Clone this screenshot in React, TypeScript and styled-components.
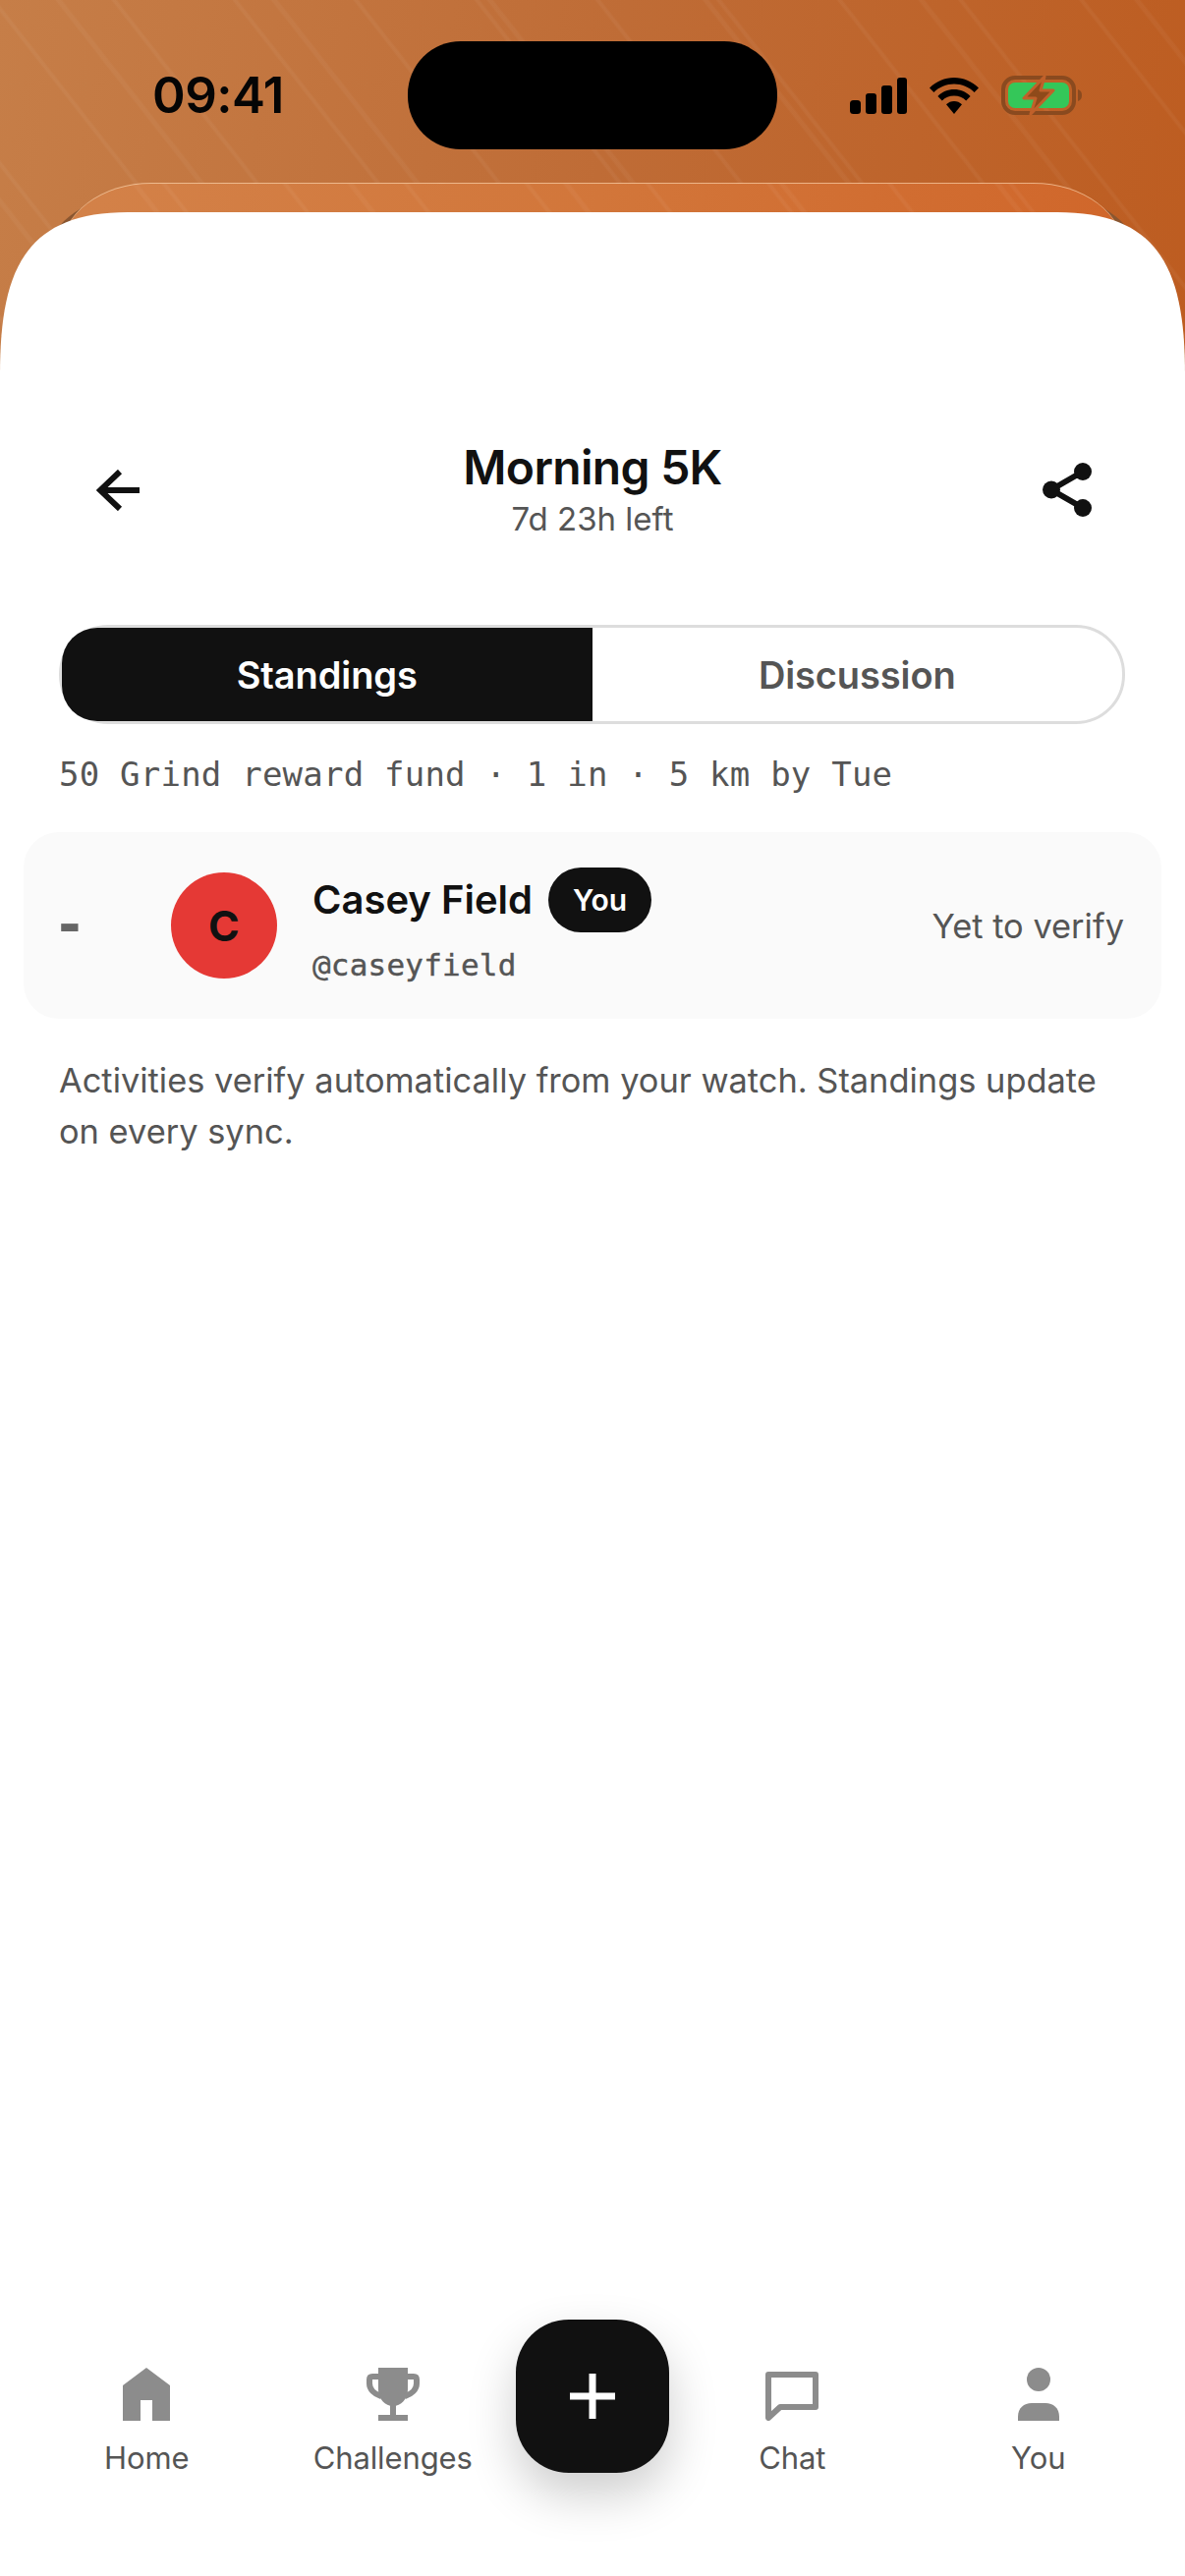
import React from "react";
import styled, { createGlobalStyle, css } from "styled-components";

const GlobalStyle = createGlobalStyle`
  html, body {
    margin: 0;
    padding: 0;
    background: #ffffff;
  }
  * {
    box-sizing: border-box;
  }
`;

const sans = `"Inter", "Liberation Sans", sans-serif`;
const mono = `"DejaVu Sans Mono", "Liberation Mono", monospace`;

const streaks = css`
  repeating-linear-gradient(
    52deg,
    rgba(255, 255, 255, 0) 0 56px,
    rgba(255, 255, 255, 0.045) 58px 60px,
    rgba(255, 255, 255, 0) 62px 97px
  ),
  repeating-linear-gradient(
    52deg,
    rgba(255, 255, 255, 0) 0 129px,
    rgba(255, 255, 255, 0.04) 131px 134px,
    rgba(255, 255, 255, 0) 136px 173px
  )
`;

const Page = styled.div`
  position: relative;
  width: 1206px;
  height: 2622px;
  overflow: hidden;
  background: #ffffff;
  font-family: ${sans};
  color: #111111;
`;

const Backdrop = styled.div`
  position: absolute;
  top: 0;
  left: 0;
  width: 100%;
  height: 420px;
  background: ${streaks},
    linear-gradient(100deg, #c67e48 0%, #bf6c36 50%, #bd5c20 100%);
`;

const ShadowCard = styled.div`
  position: absolute;
  top: 204px;
  left: 44px;
  right: 44px;
  height: 120px;
  border-radius: 72px 72px 0 0;
  background: #8a5630;
`;

const BackCard = styled.div`
  position: absolute;
  top: 186px;
  left: 62px;
  right: 62px;
  height: 120px;
  border-radius: 92px 92px 0 0 / 70px 70px 0 0;
  border-top: 1px solid rgba(255, 225, 190, 0.6);
  background: ${streaks},
    linear-gradient(100deg, #d38249 0%, #d2763a 50%, #d0662a 100%);
`;

const StatusBar = styled.div`
  position: relative;
  display: grid;
  grid-template-columns: 415px 376px 1fr;
  align-items: center;
  height: 110px;
  margin-top: 42px;
`;

const Time = styled.div`
  padding-left: 155px;
  font-size: 51px;
  font-weight: 600;
  line-height: 60px;
  color: #050505;
  letter-spacing: -0.5px;
`;

const Island = styled.div`
  height: 110px;
  border-radius: 54px;
  background: #000000;
`;

const StatusIcons = styled.div`
  display: flex;
  align-items: center;
  padding-left: 74px;
  svg {
    display: block;
    flex: none;
  }
`;

const WifiSlot = styled.div`
  margin: 0 22px 0 23px;
`;

const Sheet = styled.main`
  position: relative;
  display: flex;
  flex-direction: column;
  height: 2406px;
  margin-top: 64px;
  background: #ffffff;
  clip-path: path("M0 165C0 60 25 0 130 0H1076C1181 0 1206 60 1206 165V2406H0Z");
`;

const Header = styled.header`
  display: grid;
  grid-template-columns: 1fr auto 1fr;
  align-items: center;
  padding: 231px 95px 0;
  svg {
    display: block;
  }
`;

const BackSlot = styled.div`
  padding-left: 3px;
`;

const ShareSlot = styled.div`
  justify-self: end;
`;

const TitleBlock = styled.div`
  display: flex;
  flex-direction: column;
  align-items: center;
  gap: 1px;
`;

const Title = styled.h1`
  margin: 0;
  font-size: 48px;
  font-weight: 600;
  line-height: 58px;
  letter-spacing: -0.7px;
  color: #111111;
`;

const Subtitle = styled.div`
  font-size: 33px;
  line-height: 44px;
  color: #555555;
`;

const Tabs = styled.div`
  display: flex;
  height: 101px;
  margin: 86px 61px 0 60px;
  border: 3px solid #dddddd;
  border-radius: 50px;
`;

const Tab = styled.div<{ $active?: boolean }>`
  flex: 1;
  display: flex;
  align-items: center;
  justify-content: center;
  font-size: 38px;
  font-weight: 600;
  letter-spacing: -0.1px;
  border-radius: 36px 0 0 36px;
  color: ${(p) => (p.$active ? "#ffffff" : "#555555")};
  background: ${(p) => (p.$active ? "#111111" : "transparent")};
`;

const Meta = styled.div`
  margin: 29px 60px 0;
  font-family: ${mono};
  font-size: 34px;
  line-height: 44px;
  letter-spacing: 0.22px;
  color: #555555;
  white-space: nowrap;
`;

const Row = styled.div`
  display: grid;
  grid-template-columns: 150px 108px 1fr auto;
  align-items: center;
  height: 190px;
  margin: 37px 24px 0;
  padding-right: 38px;
  border-radius: 36px;
  background: #fafafa;
`;

const Rank = styled.div`
  margin-top: -3px;
  padding-left: 30px;
  font-family: ${mono};
  font-size: 56px;
  font-weight: 700;
  line-height: 60px;
  color: #666666;
`;

const Avatar = styled.div`
  display: flex;
  align-items: center;
  justify-content: center;
  width: 108px;
  height: 108px;
  border-radius: 50%;
  background: #e53935;
  font-size: 43px;
  font-weight: 700;
  color: #111111;
`;

const Info = styled.div`
  display: flex;
  flex-direction: column;
  gap: 13px;
  padding-left: 36px;
`;

const NameRow = styled.div`
  display: flex;
  align-items: center;
  gap: 16px;
`;

const Name = styled.div`
  font-size: 40px;
  font-weight: 600;
  color: #111111;
`;

const YouPill = styled.div`
  display: flex;
  align-items: center;
  justify-content: center;
  width: 105px;
  height: 66px;
  border-radius: 33px;
  background: #111111;
  font-size: 30px;
  font-weight: 600;
  color: #ffffff;
`;

const Handle = styled.div`
  font-family: ${mono};
  font-size: 31px;
  line-height: 40px;
  letter-spacing: 0.2px;
  color: #555555;
  -webkit-text-stroke: 0.4px #555555;
`;

const RowStatus = styled.div`
  font-size: 34.4px;
  color: #555555;
`;

const Note = styled.p`
  margin: 37px 60px 0;
  font-size: 34.4px;
  line-height: 52px;
  color: #555555;
`;

const Nav = styled.nav`
  display: flex;
  align-items: flex-start;
  margin-top: auto;
  padding: 0 24px 101px;
`;

const NavItem = styled.div`
  flex: 1;
  display: flex;
  flex-direction: column;
  align-items: center;
  padding-top: 49px;
`;

const IconBox = styled.div`
  display: flex;
  align-items: flex-end;
  justify-content: center;
  height: 54px;
  color: #8c8c8c;
  svg {
    display: block;
  }
`;

const NavLabel = styled.div`
  margin-top: 19px;
  font-size: 31px;
  font-weight: 400;
  line-height: 38px;
  letter-spacing: -0.1px;
  color: #555555;
`;

const Fab = styled.div`
  flex: none;
  display: flex;
  align-items: center;
  justify-content: center;
  width: 156px;
  height: 156px;
  border-radius: 54px;
  background: #111111;
  box-shadow: 0 22px 50px rgba(0, 0, 0, 0.2);
  svg {
    display: block;
  }
`;

const SignalIcon = () => (
  <svg width="58" height="37" viewBox="0 0 58 37" fill="#000">
    <rect x="0" y="23" width="11" height="14" rx="3.5" />
    <rect x="16" y="16" width="11" height="21" rx="3" />
    <rect x="32" y="8" width="11" height="29" rx="3" />
    <rect x="48" y="0" width="10" height="37" rx="3" />
  </svg>
);

const WifiIcon = () => (
  <svg width="50" height="37" viewBox="0 0 50 37" fill="#000">
    <path d="M25 0C15.500 0 7 3.800 0 10.500L4.400 15C10 9.700 17 6.600 25 6.600S40 9.700 45.600 15L50 10.500C43 3.800 34.500 0 25 0Z" />
    <path d="M25 12C18.500 12 12.800 14.600 8.400 18.900L12.800 23.400C16 20.300 20.200 18.500 25 18.500S34 20.300 37.200 23.400L41.600 18.900C37.200 14.600 31.500 12 25 12Z" />
    <path d="M25 24C22 24 19.200 25.200 17 27.300L25 37L33 27.300C30.800 25.200 28 24 25 24Z" />
  </svg>
);

const BatteryIcon = () => (
  <svg width="84" height="40" viewBox="0 0 84 40">
    <rect x="3" y="2" width="72" height="36" rx="12" fill="none" stroke="#8a4a1f" strokeWidth="4" />
    <rect x="8" y="7" width="62" height="26" rx="7" fill="#34c759" />
    <path d="M79 14C82 15 83 17 83 20S82 25 79 26Z" fill="#8a4a1f" />
    <path
      d="M45 1L24 23H36L31 39L54 15H41Z"
      fill="#8f4a1a"
      stroke="#c0602a"
      strokeWidth="3"
      strokeLinejoin="round"
    />
  </svg>
);

const BackIcon = () => (
  <svg width="44" height="42" viewBox="0 0 44 42" fill="none" stroke="#111" strokeWidth="6">
    <path d="M44 21H4" />
    <path d="M24 2L4 21L24 40" />
  </svg>
);

const ShareIcon = () => (
  <svg width="50" height="55" viewBox="0 0 50 55" fill="#111">
    <path d="M41 9L9 27.500L41 46" fill="none" stroke="#111" strokeWidth="6" />
    <circle cx="41" cy="9" r="9" />
    <circle cx="9" cy="27.500" r="9" />
    <circle cx="41" cy="46" r="9" />
  </svg>
);

const HomeIcon = () => (
  <svg width="48" height="54" viewBox="0 0 48 54" fill="currentColor">
    <path d="M24 0L48 18V54H30V33H18V54H0V18Z" />
  </svg>
);

const TrophyIcon = () => (
  <svg width="54" height="54" viewBox="0 0 54 54" fill="currentColor">
    <path d="M12 0H42V22C42 32 35 39 27 39C19 39 12 32 12 22Z" />
    <rect x="24" y="36" width="6" height="14" />
    <rect x="12" y="48" width="30" height="6" />
    <path
      d="M14 9H6C4 9 3 10 3 12V16C3 22 8 27 15 29M40 9H48C50 9 51 10 51 12V16C51 22 46 27 39 29"
      fill="none"
      stroke="currentColor"
      strokeWidth="6"
    />
  </svg>
);

const ChatIcon = () => (
  <svg width="54" height="50" viewBox="0 0 54 50" fill="none" stroke="currentColor" strokeWidth="6" strokeLinejoin="round">
    <path d="M3 3H51V36H15L3 47Z" />
  </svg>
);

const PersonIcon = () => (
  <svg width="42" height="54" viewBox="0 0 42 54" fill="currentColor">
    <ellipse cx="21" cy="12" rx="12" ry="12" />
    <path d="M0 54V50C0 41 6 36 14 36H28C36 36 42 41 42 50V54Z" />
  </svg>
);

const PlusIcon = () => (
  <svg width="46" height="46" viewBox="0 0 46 46" fill="none" stroke="#fff" strokeWidth="7">
    <path d="M23 0V46M0 23H46" />
  </svg>
);

const navLeft = [
  { label: "Home", icon: <HomeIcon /> },
  { label: "Challenges", icon: <TrophyIcon /> },
];

const navRight = [
  { label: "Chat", icon: <ChatIcon /> },
  { label: "You", icon: <PersonIcon /> },
];

const renderNavItem = (item: { label: string; icon: React.ReactNode }) => (
  <NavItem key={item.label}>
    <IconBox>{item.icon}</IconBox>
    <NavLabel>{item.label}</NavLabel>
  </NavItem>
);

const App: React.FC = () => {
  return (
    <Page>
      <GlobalStyle />
      <Backdrop />
      <ShadowCard />
      <BackCard />
      <StatusBar>
        <Time>09:41</Time>
        <Island />
        <StatusIcons>
          <SignalIcon />
          <WifiSlot>
            <WifiIcon />
          </WifiSlot>
          <BatteryIcon />
        </StatusIcons>
      </StatusBar>
      <Sheet>
        <Header>
          <BackSlot>
            <BackIcon />
          </BackSlot>
          <TitleBlock>
            <Title>Morning 5K</Title>
            <Subtitle>7d 23h left</Subtitle>
          </TitleBlock>
          <ShareSlot>
            <ShareIcon />
          </ShareSlot>
        </Header>
        <Tabs>
          <Tab $active>Standings</Tab>
          <Tab>Discussion</Tab>
        </Tabs>
        <Meta>50 Grind reward fund · 1 in · 5 km by Tue</Meta>
        <Row>
          <Rank>-</Rank>
          <Avatar>C</Avatar>
          <Info>
            <NameRow>
              <Name>Casey Field</Name>
              <YouPill>You</YouPill>
            </NameRow>
            <Handle>@caseyfield</Handle>
          </Info>
          <RowStatus>Yet to verify</RowStatus>
        </Row>
        <Note>
          Activities verify automatically from your watch. Standings update on every sync.
        </Note>
        <Nav>
          {navLeft.map(renderNavItem)}
          <Fab>
            <PlusIcon />
          </Fab>
          {navRight.map(renderNavItem)}
        </Nav>
      </Sheet>
    </Page>
  );
};

export default App;
